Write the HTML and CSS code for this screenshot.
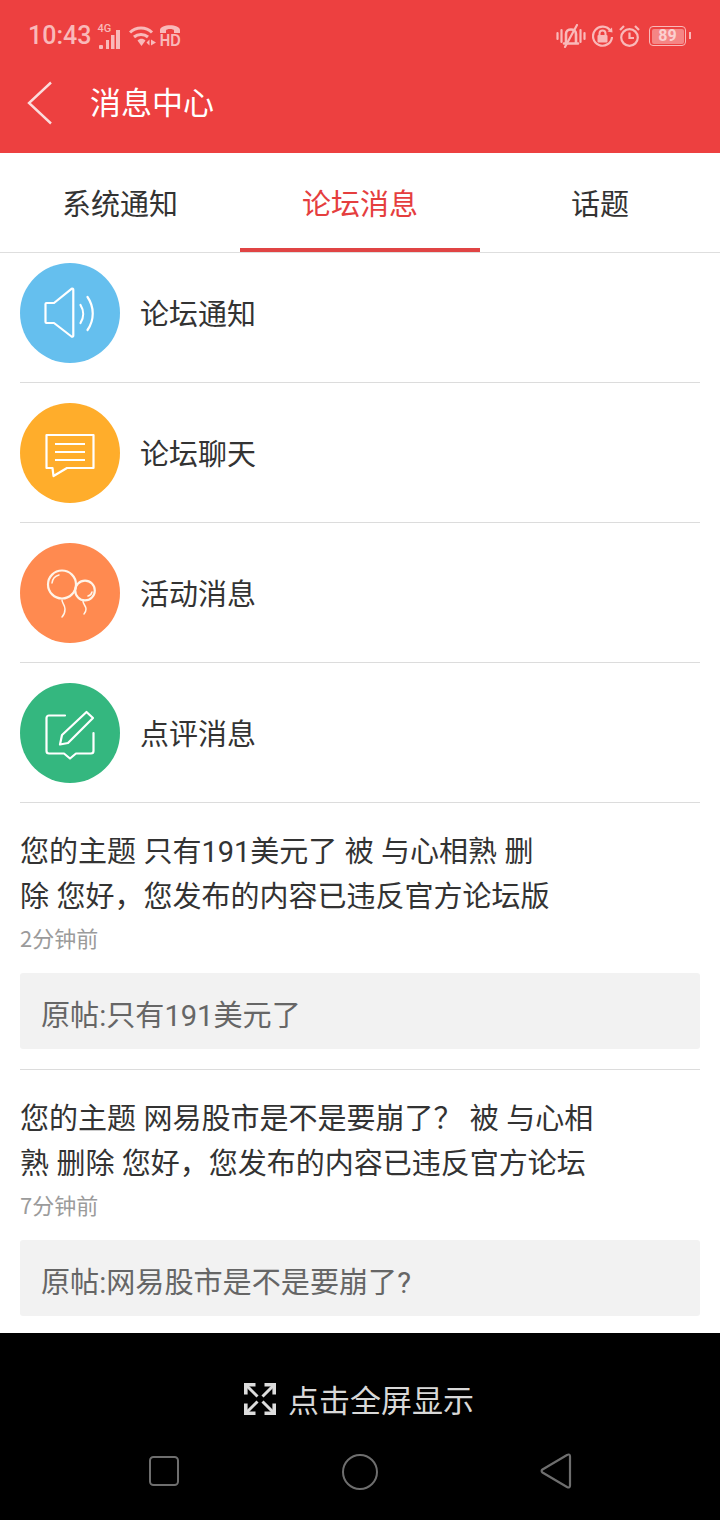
FILE: index.html
```html
<!DOCTYPE html>
<html lang="zh">
<head>
<meta charset="utf-8">
<title>消息中心</title>
<link rel="stylesheet" href="styles.css">
</head>
<body>
<div class="screen">
  <header class="header">
    <div class="status">
      <div class="status-left">
        <span class="time">10:43</span>
        <span class="net"><span class="net-label">4G</span>
          <svg class="bars" width="24" height="19" viewBox="0 0 24 19"><g fill="#f9b9b9"><rect x="2" y="15" width="4" height="4" rx="1"/><rect x="9" y="10" width="3" height="9"/><rect x="14" y="5" width="3.500" height="14"/><rect x="19" y="0" width="4" height="19"/></g></svg>
        </span>
        <svg class="wifi" width="27" height="22" viewBox="0 0 27 22"><g fill="none" stroke="#f9b9b9" stroke-width="3"><path d="M1 7.500C7 1.500 17 1.500 23 7.500"/><path d="M5 12C9 8.500 15 8.500 19 12"/></g><path d="M8.500 15.500C11 13 14 13 16.500 15.500L12.500 21Z" fill="#f9b9b9"/><path d="M20.500 14.500v6l-3-3zM22 14.500l5 3-5 3z" fill="#f9b9b9"/></svg>
        <span class="hd">
          <svg width="20" height="8" viewBox="0 0 20 8"><path d="M0 8V5C0 -1.500 20 -1.500 20 5V8H14V5.500C14 3.500 6 3.500 6 5.500V8Z" fill="#f9b9b9"/></svg>
          <span class="hd-label">HD</span>
        </span>
      </div>
      <div class="status-right">
        <svg width="30" height="24" viewBox="0 0 30 24"><g fill="none" stroke="#f9b9b9" stroke-width="2.200" stroke-linecap="round"><path d="M1.500 9v6M5.500 6v12M24.500 6v12M28.500 9v6"/><path d="M8 19.500h14M10 19V10c0-6 10-6 10 0v9" stroke-width="2.600"/><path d="M9 23L21 1"/></g></svg>
        <svg width="21" height="22" viewBox="0 0 21 22"><path d="M18.500 6A9.500 9.500 0 1 0 20 12" fill="none" stroke="#f9b9b9" stroke-width="2.200"/><path d="M15.500 6.500l5 1-.5-5z" fill="#f9b9b9"/><rect x="5.500" y="10" width="10" height="7.500" rx="1" fill="#f9b9b9"/><path d="M7.500 10V8.500c0-4 6-4 6 0V10" fill="none" stroke="#f9b9b9" stroke-width="2"/></svg>
        <svg width="21" height="22" viewBox="0 0 21 22"><circle cx="10.500" cy="12.500" r="8.300" fill="none" stroke="#f9b9b9" stroke-width="2.200"/><path d="M10.500 7.500v5.500h4.500M1 5l4-4M20 5l-4-4" fill="none" stroke="#f9b9b9" stroke-width="2.200"/></svg>
        <span class="battery"><span class="battery-level">89</span></span>
      </div>
    </div>
    <div class="titlebar">
      <svg class="back" width="26" height="44" viewBox="0 0 26 44"><path d="M24 1.500L2 22l22 20.500" fill="none" stroke="#fbdcdc" stroke-width="2.400"/></svg>
      <h1 class="title">消息中心</h1>
    </div>
  </header>

  <nav class="tabs">
    <div class="tab">系统通知</div>
    <div class="tab tab-active">论坛消息</div>
    <div class="tab">话题</div>
  </nav>

  <main class="content">
    <div class="entry entry-first">
      <span class="circle circle-blue">
        <svg width="60" height="60" viewBox="0 0 60 60"><g fill="none" stroke="#fff" stroke-width="2.200" stroke-linejoin="round" stroke-linecap="round"><path d="M6.500 20H14L31.500 5.800c1-.6 1.800 0 1.800 1V52.500c0 1-.8 1.600-1.800 1L14 40H6.500c-.5 0-1-.4-1-1V21c0-.6.500-1 1-1z"/><path d="M40.500 22c3.500 5.500 3.500 12.500 0 18"/><path d="M47.500 14c7 10 7 23 0 33"/></g></svg>
      </span>
      <span class="entry-label">论坛通知</span>
    </div>
    <div class="entry">
      <span class="circle circle-orange">
        <svg width="60" height="60" viewBox="0 0 60 60"><g fill="none" stroke="#fff" stroke-width="2.200" stroke-linejoin="round"><path d="M6.500 12h47v33H27l-13.500 8-1-8h-6z"/><path d="M15 21h30M15 29h30M15 37h30"/></g></svg>
      </span>
      <span class="entry-label">论坛聊天</span>
    </div>
    <div class="entry">
      <span class="circle circle-coral">
        <svg width="60" height="60" viewBox="0 0 60 60"><g fill="none" stroke="#fff4e8" stroke-width="2.200" stroke-linecap="round"><circle cx="22" cy="21.500" r="14"/><circle cx="45" cy="27.500" r="9.800"/></g><g fill="none" stroke="#fff4e8" stroke-width="1.500" stroke-linecap="round"><path d="M12 20c.5-4 3-7 7-8M48 33c2-.5 3.500-2 4-4"/><path d="M22 37c0 3 3 5 3 9s-1 6-3 8"/><path d="M43 38c0 3 3 5 3 8s-1 4-2 5"/></g></svg>
      </span>
      <span class="entry-label">活动消息</span>
    </div>
    <div class="entry">
      <span class="circle circle-green">
        <svg width="60" height="60" viewBox="0 0 60 60"><g fill="none" stroke="#fff" stroke-width="2.200" stroke-linejoin="round" stroke-linecap="round"><path d="M25 12.500H9c-1.500 0-2.500 1-2.500 2.500V48c0 1.500 1 2.500 2.500 2.500h15l6 5 6-5h15c1.500 0 2.500-1 2.500-2.500V30"/><path d="M46.500 9l6.500 6-25 25-8 1.500 2-9.500z"/></g></svg>
      </span>
      <span class="entry-label">点评消息</span>
    </div>

    <article class="notice">
      <p class="notice-text">您的主题 只有191美元了 被 与心相熟 删<br>除 您好，您发布的内容已违反官方论坛版</p>
      <div class="notice-time">2分钟前</div>
      <div class="notice-quote">原帖:只有191美元了</div>
    </article>
    <article class="notice notice-last">
      <p class="notice-text">您的主题 网易股市是不是要崩了？ 被 与心相<br>熟 删除 您好，您发布的内容已违反官方论坛</p>
      <div class="notice-time">7分钟前</div>
      <div class="notice-quote">原帖:网易股市是不是要崩了?</div>
    </article>
  </main>

  <footer class="footer">
    <div class="fullscreen">
      <svg width="32" height="32" viewBox="0 0 32 32"><g fill="none" stroke="#dcdcdc" stroke-width="3.600"><path d="M1.800 11.500V1.800H11.500M20.500 1.800H30.200V11.500M1.800 20.500V30.200H11.500M30.200 20.500V30.200H20.500"/><path d="M3 3L13.500 13.500M29 3L18.500 13.500M3 29L13.500 18.500M29 29L18.500 18.500" stroke-width="3"/></g></svg>
      <span class="fullscreen-label">点击全屏显示</span>
    </div>
    <div class="navkeys">
      <svg width="30" height="30" viewBox="0 0 30 30"><rect x="1" y="1" width="28" height="28" rx="3.500" fill="none" stroke="#6e6e6e" stroke-width="2"/></svg>
      <svg width="36" height="36" viewBox="-1 -1 36 36" overflow="visible"><circle cx="18" cy="18" r="17" fill="none" stroke="#6e6e6e" stroke-width="2"/></svg>
      <svg width="32" height="36" viewBox="0 0 32 36"><path d="M2.500 16.500L27 2c2-1 3-.5 3 1.500v29c0 2-1 2.500-3 1.500L2.500 19.500c-1.200-.8-1.200-2.200 0-3z" fill="none" stroke="#6e6e6e" stroke-width="2.200"/></svg>
    </div>
  </footer>
</div>
</body>
</html>
```
FILE: styles.css
```css
* { box-sizing: border-box; }
html, body { margin: 0; padding: 0; }
body {
  width: 720px;
  height: 1520px;
  overflow: hidden;
  background: #fff;
  font-family: "Noto Sans CJK SC", "Noto Sans", sans-serif;
}
.screen { display: flex; flex-direction: column; height: 1520px; }

.header { height: 153px; background: #ed4040; flex: none; }
.status {
  height: 72px;
  padding: 20px 30px 0 28px;
  display: flex;
  justify-content: space-between;
  align-items: flex-start;
}
.status-left, .status-right { display: flex; align-items: center; height: 32px; }
.status-left { gap: 6px; }
.status-right { gap: 6px; padding-right: 4px; }
.time { font: 500 25px/32px Roboto, sans-serif; color: #f9b9b9; }
.net { position: relative; display: block; width: 23px; height: 26px; }
.net-label { position: absolute; left: 0; top: 0; font: 500 11px/12px Roboto, sans-serif; color: #f9b9b9; }
.bars { position: absolute; left: 0; top: 7px; }
.wifi { margin-left: 3px; }
.hd { display: flex; flex-direction: column; align-items: center; width: 22px; margin-left: -3px; }
.hd-label { font: 700 17px/14px "Liberation Sans", sans-serif; color: #f9b9b9; transform: scaleX(.85); margin-top: 1px; }
.battery {
  width: 37px;
  height: 20px;
  margin-left: 3px;
  border: 1.500px solid #f9b9b9;
  border-radius: 4px;
  padding: 1.500px;
  position: relative;
  display: flex;
}
.battery::after {
  content: "";
  position: absolute;
  right: -6px;
  top: 5px;
  width: 2px;
  height: 7px;
  background: #f9b9b9;
}
.battery-level {
  flex: 1;
  background: #f58585;
  border-radius: 2px;
  color: #fbd0d0;
  font: 700 16px/14px Roboto, sans-serif;
  text-align: center;
}
.titlebar { height: 81px; display: flex; align-items: flex-start; padding-left: 27px; }
.back { margin-top: 9px; flex: none; }
.title {
  margin: 5px 0 0 37px;
  font-size: 31px;
  line-height: 48px;
  font-weight: 400;
  color: #fff;
}

.tabs {
  height: 100px;
  flex: none;
  display: flex;
  border-bottom: 1px solid #dedede;
}
.tab {
  flex: 1;
  height: 99px;
  text-align: center;
  font-size: 29px;
  line-height: 98px;
  color: #333;
}
.tab-active { color: #e53e3e; border-bottom: 4px solid #e04444; }

.content { flex: 1; margin: 0 20px; overflow: hidden; }
.entry {
  height: 140px;
  display: flex;
  align-items: center;
  gap: 20px;
  border-bottom: 1px solid #dcdcdc;
}
.entry-first { height: 130px; padding-bottom: 10px; }
.circle {
  width: 100px;
  height: 100px;
  border-radius: 50%;
  display: flex;
  align-items: center;
  justify-content: center;
  flex: none;
}
.circle-blue { background: #65bfee; }
.circle-orange { background: #ffad2b; }
.circle-coral { background: #ff8a50; }
.circle-green { background: #34b77f; }
.entry-label { font-size: 29px; color: #333; line-height: 40px; margin-bottom: 2px; }

.notice { height: 267px; padding-top: 27px; border-bottom: 1px solid #dcdcdc; }
.notice-last { border-bottom: 0; }
.notice-text {
  margin: 0;
  font-family: Roboto, "Noto Sans CJK SC", sans-serif;
  font-size: 29px;
  line-height: 45px;
  word-spacing: .2px;
  color: #333;
  white-space: nowrap;
}
.notice-time { font-size: 22px; line-height: 34px; padding-bottom: 7px; color: #9b9b9b; }
.notice-quote {
  margin-top: 12px;
  height: 76px;
  padding-left: 21px;
  background: #f2f2f2;
  border-radius: 3px;
  font-family: Roboto, "Noto Sans CJK SC", sans-serif;
  font-size: 29.100px;
  line-height: 86px;
  color: #666;
}

.footer {
  height: 187px;
  flex: none;
  background: #000;
  display: flex;
  flex-direction: column;
  align-items: center;
}
.fullscreen { display: flex; align-items: center; gap: 12px; margin: 48px 2px 0 0; height: 36px; }
.fullscreen-label { font-size: 31px; line-height: 36px; color: #d8d8d8; }
.navkeys {
  margin-top: 36px;
  width: 423px;
  display: flex;
  justify-content: space-between;
  align-items: center;
}
```
